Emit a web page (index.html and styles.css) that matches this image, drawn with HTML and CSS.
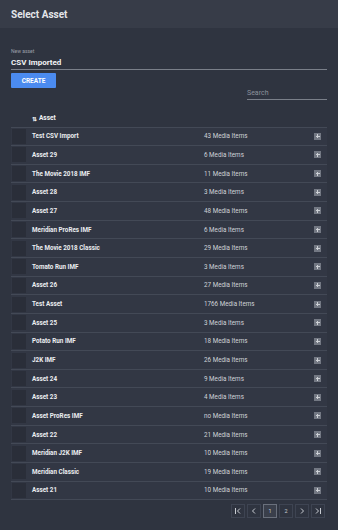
FILE: index.html
```html
<!DOCTYPE html>
<html>
<head>
<meta charset="utf-8">
<link rel="stylesheet" href="styles.css">
</head>
<body>
<div class="header"><h1 class="title">Select Asset</h1></div>
<main class="content">
  <div class="field">
    <label class="field-label">New asset</label>
    <div class="field-value">CSV Imported</div>
  </div>
  <button class="btn-create">CREATE</button>
  <div class="search-row"><div class="search">Search</div></div>
  <div class="table-head"><span class="sort">⇅</span> Asset</div>
  <div class="rows">
    <div class="row"><div class="thumb"></div><div class="name">Test CSV Import</div><div class="count">43 Media Items</div><div class="plus"></div></div>
    <div class="row"><div class="thumb"></div><div class="name">Asset 29</div><div class="count">6 Media Items</div><div class="plus"></div></div>
    <div class="row"><div class="thumb"></div><div class="name">The Movie 2018 IMF</div><div class="count">11 Media Items</div><div class="plus"></div></div>
    <div class="row"><div class="thumb"></div><div class="name">Asset 28</div><div class="count">3 Media Items</div><div class="plus"></div></div>
    <div class="row"><div class="thumb"></div><div class="name">Asset 27</div><div class="count">48 Media Items</div><div class="plus"></div></div>
    <div class="row"><div class="thumb"></div><div class="name">Meridian ProRes IMF</div><div class="count">6 Media Items</div><div class="plus"></div></div>
    <div class="row"><div class="thumb"></div><div class="name">The Movie 2018 Classic</div><div class="count">29 Media Items</div><div class="plus"></div></div>
    <div class="row"><div class="thumb"></div><div class="name">Tomato Run IMF</div><div class="count">3 Media Items</div><div class="plus"></div></div>
    <div class="row"><div class="thumb"></div><div class="name">Asset 26</div><div class="count">27 Media Items</div><div class="plus"></div></div>
    <div class="row"><div class="thumb"></div><div class="name">Test Asset</div><div class="count">1766 Media Items</div><div class="plus"></div></div>
    <div class="row"><div class="thumb"></div><div class="name">Asset 25</div><div class="count">3 Media Items</div><div class="plus"></div></div>
    <div class="row"><div class="thumb"></div><div class="name">Potato Run IMF</div><div class="count">18 Media Items</div><div class="plus"></div></div>
    <div class="row"><div class="thumb"></div><div class="name">J2K IMF</div><div class="count">26 Media Items</div><div class="plus"></div></div>
    <div class="row"><div class="thumb"></div><div class="name">Asset 24</div><div class="count">9 Media Items</div><div class="plus"></div></div>
    <div class="row"><div class="thumb"></div><div class="name">Asset 23</div><div class="count">4 Media Items</div><div class="plus"></div></div>
    <div class="row"><div class="thumb"></div><div class="name">Asset ProRes IMF</div><div class="count">no Media Items</div><div class="plus"></div></div>
    <div class="row"><div class="thumb"></div><div class="name">Asset 22</div><div class="count">21 Media Items</div><div class="plus"></div></div>
    <div class="row"><div class="thumb"></div><div class="name">Meridian J2K IMF</div><div class="count">10 Media Items</div><div class="plus"></div></div>
    <div class="row"><div class="thumb"></div><div class="name">Meridian Classic</div><div class="count">19 Media Items</div><div class="plus"></div></div>
    <div class="row"><div class="thumb"></div><div class="name">Asset 21</div><div class="count">10 Media Items</div><div class="plus"></div></div>
  </div>
  <nav class="pager">
    <div class="pg"><svg width="8" height="8" viewBox="0 0 8 8"><path d="M1.5 1v6M6 1.5L3.5 4 6 6.5" fill="none" stroke="#c9ccd2" stroke-width="1"/></svg></div>
    <div class="pg"><svg width="8" height="8" viewBox="0 0 8 8"><path d="M5 1.5L2.5 4 5 6.5" fill="none" stroke="#c9ccd2" stroke-width="1"/></svg></div>
    <div class="pg active">1</div>
    <div class="pg">2</div>
    <div class="pg"><svg width="8" height="8" viewBox="0 0 8 8"><path d="M3 1.5L5.5 4 3 6.5" fill="none" stroke="#c9ccd2" stroke-width="1"/></svg></div>
    <div class="pg"><svg width="8" height="8" viewBox="0 0 8 8"><path d="M2 1.5L4.5 4 2 6.5M6.5 1v6" fill="none" stroke="#c9ccd2" stroke-width="1"/></svg></div>
  </nav>
</main>
</body>
</html>
```
FILE: styles.css
```css
html, body {
  margin: 0;
  padding: 0;
  background: #2f3440;
  font-family: Roboto, "Liberation Sans", sans-serif;
  color: #e6e8ec;
}
.header {
  height: 28px;
  background: #373c48;
  display: flex;
  align-items: center;
  padding: 0 11px;
}
.title {
  margin: 0;
  font-size: 10px;
  font-weight: 700;
  color: #e4e6ea;
}
.content {
  padding: 20px 11px 0 11px;
}
.field {
  display: flex;
  flex-direction: column;
  border-bottom: 1.5px solid #7a7f89;
  padding-bottom: 1px;
}
.field-label {
  font-size: 5px;
  color: #9a9fa8;
  line-height: 7px;
  margin-bottom: 3px;
}
.field-value {
  font-size: 8px;
  font-weight: 700;
  color: #f2f3f5;
  line-height: 10px;
}
.btn-create {
  margin-top: 3px;
  width: 45px;
  height: 15px;
  border: none;
  border-radius: 1px;
  background: #4b8bf0;
  color: #ffffff;
  font-family: Roboto, "Liberation Sans", sans-serif;
  font-size: 6.5px;
  font-weight: 700;
  padding: 0;
  display: block;
}
.search-row {
  display: flex;
  justify-content: flex-end;
}
.search {
  width: 80px;
  font-size: 7px;
  color: #8c919b;
  line-height: 10px;
  border-bottom: 1.5px solid #7a7f89;
  padding-bottom: 0.5px;
}
.table-head {
  height: 27px;
  box-sizing: border-box;
  display: flex;
  align-items: flex-end;
  padding-left: 21px;
  padding-bottom: 5px;
  font-size: 6.5px;
  font-weight: 700;
  color: #f2f3f5;
}
.sort {
  font-size: 6px;
  margin-right: 2px;
}
.rows {
  display: flex;
  flex-direction: column;
}
.row {
  height: 17.65px;
  border-top: 1px solid #434956;
  background: #323744;
  display: flex;
  align-items: center;
  font-size: 6.3px;
}
.row:last-child {
  border-bottom: 1px solid #434956;
}
.thumb {
  width: 14px;
  height: 15px;
  margin-left: 1px;
  background: #2a2e39;
}
.name {
  margin-left: 6px;
  width: 172px;
  font-weight: 700;
  color: #eceef1;
}
.count {
  flex: 1;
  color: #cfd2d8;
}
.plus {
  width: 7px;
  height: 7px;
  margin-right: 6px;
  background: #737883;
  position: relative;
}
.plus::before, .plus::after {
  content: "";
  position: absolute;
  background: #cdd0d5;
}
.plus::before {
  left: 1.5px;
  top: 3px;
  width: 4px;
  height: 1px;
}
.plus::after {
  left: 3px;
  top: 1.5px;
  width: 1px;
  height: 4px;
}
.pager {
  display: flex;
  justify-content: flex-end;
  gap: 2px;
  padding-right: 2px;
  margin-top: 4px;
}
.pg {
  width: 12px;
  height: 12px;
  border: 1px solid #3e4452;
  display: flex;
  align-items: center;
  justify-content: center;
  font-size: 5.5px;
  color: #c9ccd2;
}
.pg.active {
  border-color: #6a707c;
  background: #3a3f4b;
}
```
